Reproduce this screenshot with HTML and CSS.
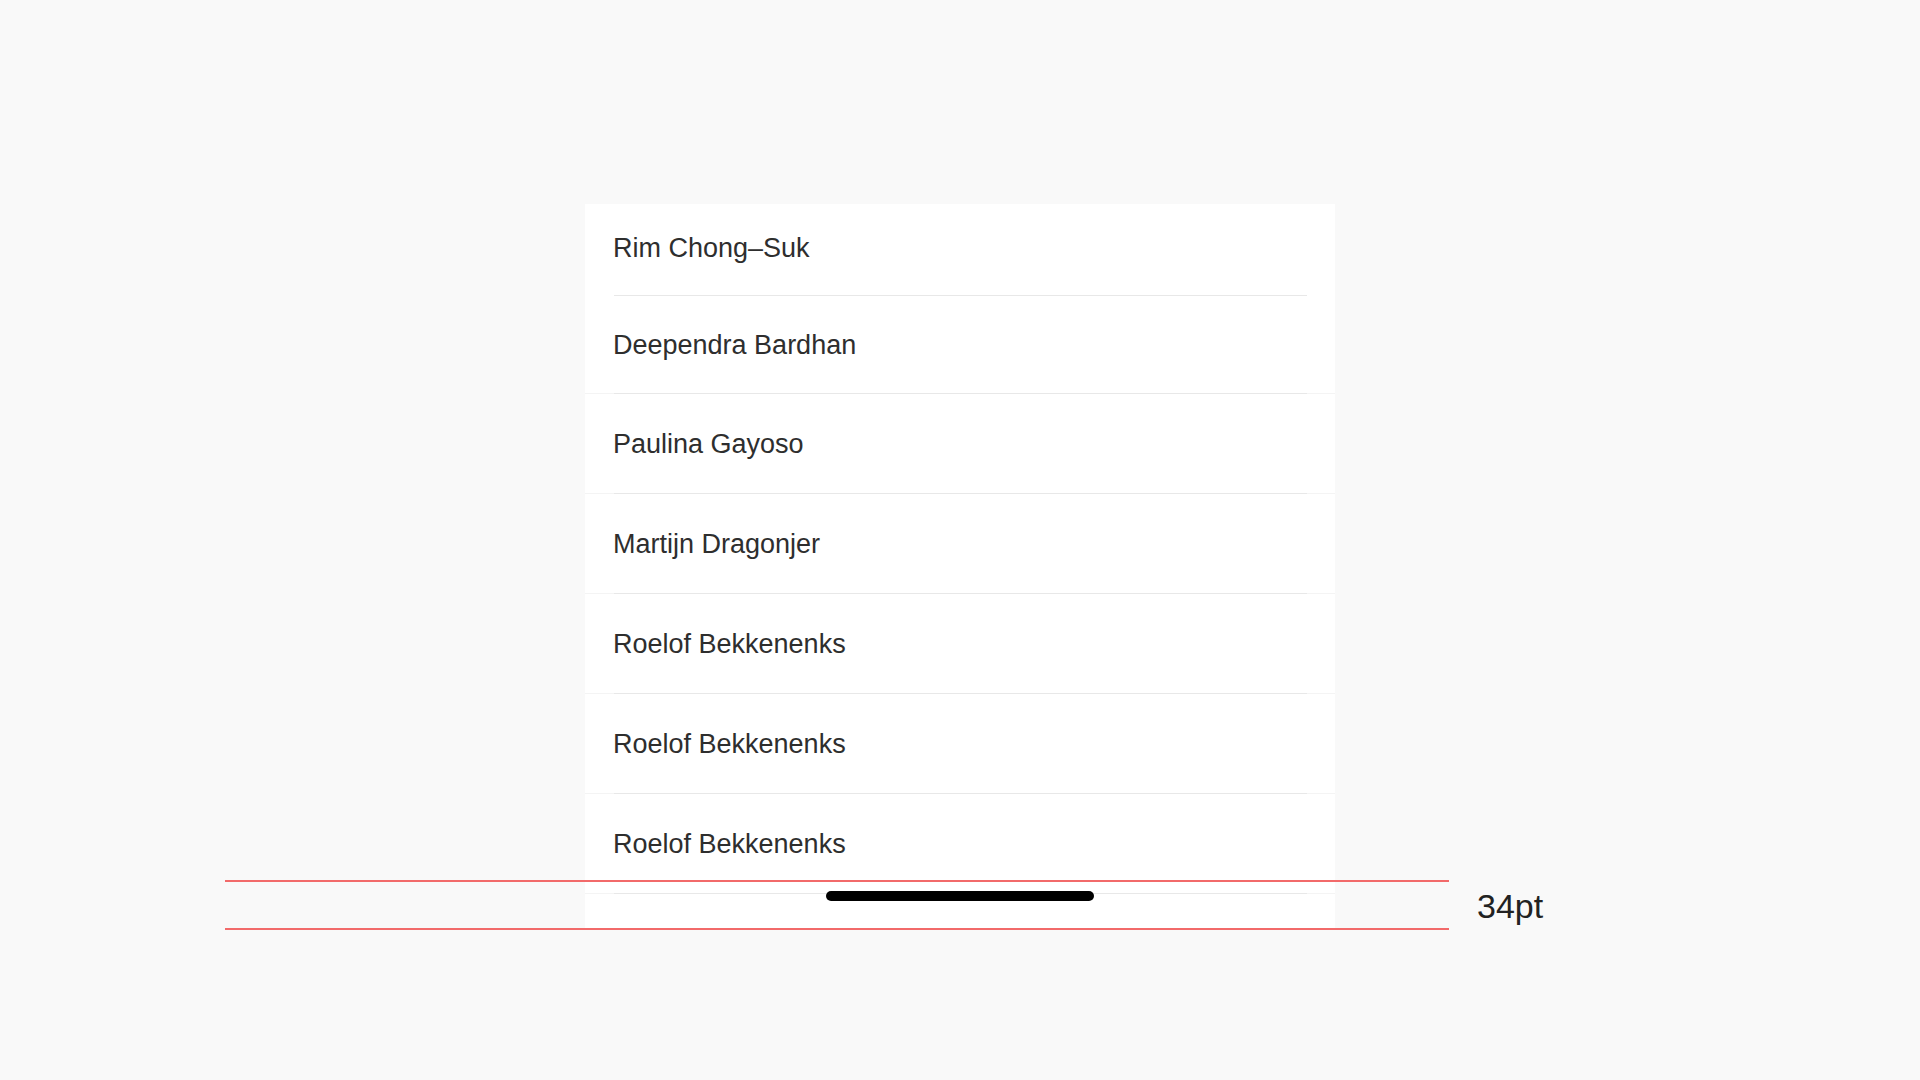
FILE: index.html
```html
<!DOCTYPE html>
<html>
    <head>
        <meta charset="utf-8" />
        <link rel="stylesheet" href="styles.css">
    </head>

    <body>
        <div class="screen">
            <ul class="list">
                <li class="row first"><span>Rim Chong–Suk</span></li>
                <li class="row second"><span>Deependra Bardhan</span></li>
                <li class="row"><span>Paulina Gayoso</span></li>
                <li class="row"><span>Martijn Dragonjer</span></li>
                <li class="row"><span>Roelof Bekkenenks</span></li>
                <li class="row"><span>Roelof Bekkenenks</span></li>
                <li class="row"><span>Roelof Bekkenenks</span></li>
                <li class="row tail"></li>
            </ul>
            <div class="home-indicator"></div>
        </div>

        <!-- safe area marker -->
        <div class="measure">
            <div class="measure-band"></div>
            <span class="measure-label">34pt</span>
        </div>
    </body>
</html>
```

FILE: styles.css
```css
body {
    margin: 0;
    background: #f9f9f9;
    font-family: "Liberation Sans", Arial, sans-serif;
}

.screen {
    position: relative;
    width: 750px;
    height: 726px;
    margin: 204px auto 0;
    background: #fff;
    overflow: hidden;
}

.list {
    margin: 0;
    padding: 0;
    list-style: none;
}

.row {
    display: flex;
    align-items: center;
    height: 97px;
    padding: 2px 0 1px 28px;
    font-size: 27px;
    color: #2e2e2e;
    /* inset divider with a faint full-width line under it */
    background-image: linear-gradient(to right, #f4f4f4 29px, #e8e8e8 29px, #e8e8e8 calc(100% - 28px), #f4f4f4 calc(100% - 28px));
    background-size: 100% 1px;
    background-position: 0 100%;
    background-repeat: no-repeat;
}

.row.first {
    height: 88px;
    padding-top: 0;
    padding-bottom: 4px;
    background-image: linear-gradient(to right, #fff 29px, #e8e8e8 29px, #e8e8e8 calc(100% - 28px), #fff calc(100% - 28px));
}

.row.second {
    height: 95px;
}

.row.tail {
    height: 36px;
    padding: 0;
    background: none;
}

.home-indicator {
    position: absolute;
    left: 50%;
    bottom: 29px;
    width: 268px;
    height: 10px;
    margin-left: -134px;
    border-radius: 5px;
    background: #000;
}

.measure {
    position: absolute;
    top: 880px;
    left: 225px;
    display: flex;
    align-items: center;
    gap: 28px;
}

.measure-band {
    width: 1224px;
    height: 46px;
    border-top: 2px solid #f26a6a;
    border-bottom: 2px solid #f26a6a;
}

.measure-label {
    font-size: 34px;
    color: #222;
    margin-top: 2px;
}
```
